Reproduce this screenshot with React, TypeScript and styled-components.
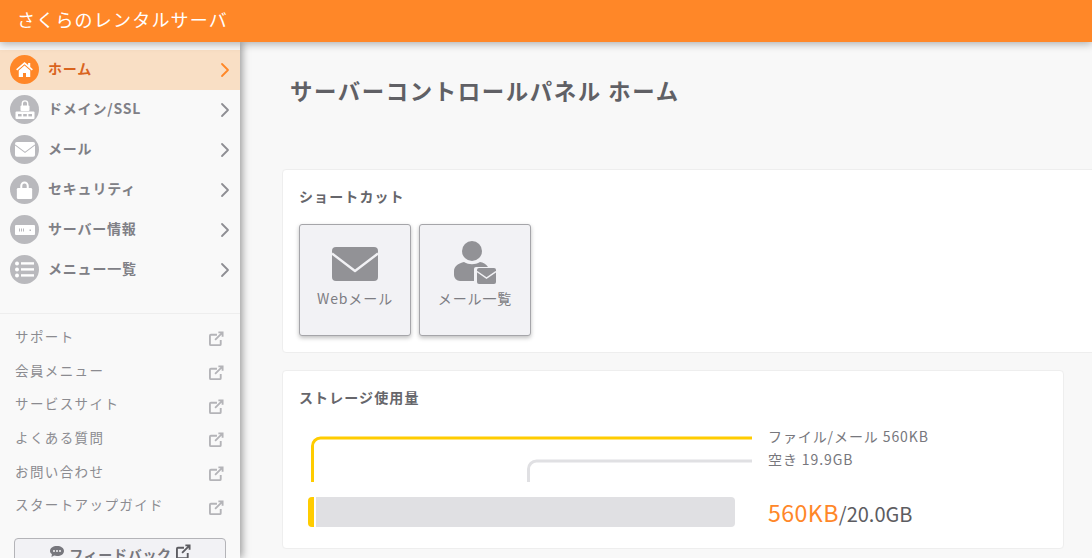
import styled, { createGlobalStyle } from 'styled-components'
import { FiChevronRight } from 'react-icons/fi'

const GlobalStyle = createGlobalStyle`
  html, body {
    margin: 0;
    height: 100%;
    overflow: hidden;
    background: #f8f8f8;
    font-family: "Noto Sans CJK JP", "Noto Sans", sans-serif;
  }
`

const Page = styled.div`
  width: 1092px;
  height: 558px;
  overflow: hidden;
  display: flex;
  flex-direction: column;
`
const Header = styled.header`
  height: 42px;
  flex: none;
  background: #ff8728;
  color: #fff;
  font-size: 18px;
  line-height: 39px;
  letter-spacing: 1.2px;
  padding-left: 17px;
  box-shadow: 0 2px 8px rgba(0, 0, 0, 0.3);
  position: relative;
  z-index: 2;
`
const Body = styled.div`
  flex: 1;
  display: flex;
  min-height: 0;
`
const Sidebar = styled.aside`
  width: 240px;
  flex: none;
  background: #f9f9f9;
  box-shadow: 2px 0 8px rgba(0, 0, 0, 0.4);
  padding-top: 8px;
  position: relative;
  z-index: 1;
`
const MenuItem = styled.div<{ $active?: boolean }>`
  box-sizing: border-box;
  height: 40px;
  display: flex;
  align-items: center;
  padding: 0 3px 1px 10px;
  background: ${(p) => (p.$active ? '#f9dfc5' : 'transparent')};
  color: ${(p) => (p.$active ? '#d9641e' : '#808086')};
  font-size: 14px;
  font-weight: 700;
  letter-spacing: 0.8px;
`
const MenuIcon = styled.span<{ $active?: boolean }>`
  width: 29px;
  height: 29px;
  border-radius: 50%;
  flex: none;
  background: ${(p) => (p.$active ? '#ff8728' : '#b9b9bd')};
  display: flex;
  align-items: center;
  justify-content: center;
  margin-right: 9px;
`
const MenuLabel = styled.span`
  flex: 1;
  position: relative;
  top: -2px;
`
const Chevron = styled(FiChevronRight)<{ $active?: boolean }>`
  width: 24px;
  height: 24px;
  stroke-width: 1.8;
  color: ${(p) => (p.$active ? '#ff8728' : '#8e8e93')};
`
const SubMenu = styled.nav`
  margin-top: 23px;
  border-top: 1px solid #eeeeee;
  padding: 6px 15px 0;
`
const SubItem = styled.div`
  height: 33.7px;
  display: flex;
  align-items: center;
  justify-content: space-between;
  color: #8b8b90;
  font-size: 13.5px;
  letter-spacing: 1.4px;
`
const SubLabel = styled.span`
  position: relative;
  top: -1px;
`
const SubIcon = styled.span`
  display: flex;
  position: relative;
  top: 2px;
  margin-right: 1px;
`
const FeedbackButton = styled.button`
  margin: 16px 0 0 -1px;
  width: 212px;
  height: 34px;
  display: flex;
  align-items: flex-start;
  justify-content: center;
  gap: 4px;
  padding: 5px 0 0;
  background: #f2f2f5;
  border: 1px solid #b4b4b8;
  border-radius: 4px;
  color: #77777d;
  font-family: inherit;
  font-size: 14px;
  font-weight: 700;
  letter-spacing: 0.7px;
`
const Main = styled.main`
  flex: 1;
  min-width: 0;
  padding: 0 0 0 42px;
`
const Title = styled.h1`
  margin: 30px 0 0 8px;
  font-size: 22.4px;
  line-height: 36px;
  font-weight: 700;
  color: #606065;
  letter-spacing: 1.6px;
`
const Card = styled.section<{ $width: number; $height: number }>`
  box-sizing: border-box;
  width: ${(p) => p.$width}px;
  height: ${(p) => p.$height}px;
  background: #fff;
  border: 1px solid #eeeeee;
  border-radius: 4px;
  padding: 16px;
`
const ShortcutCard = styled(Card)`
  margin-top: 61px;
`
const StorageCard = styled(Card)`
  margin-top: 17px;
`
const CardTitle = styled.h2`
  margin: 0;
  font-size: 14px;
  line-height: 20px;
  font-weight: 700;
  color: #66666b;
  letter-spacing: 1.1px;
`
const ShortcutRow = styled.div`
  display: flex;
  gap: 8px;
  margin-top: 18px;
`
const Shortcut = styled.button`
  box-sizing: border-box;
  width: 112px;
  height: 112px;
  display: flex;
  flex-direction: column;
  align-items: center;
  padding: 16px 0 0;
  background: #f2f2f5;
  border: 1px solid #a5a5a9;
  border-radius: 3px;
  box-shadow: 0 2px 4px rgba(0, 0, 0, 0.25);
  color: #7d7d83;
  font-family: inherit;
  font-size: 14px;
  line-height: 20px;
  letter-spacing: 0.9px;
`
const ShortcutIcon = styled.span`
  height: 46px;
  margin-bottom: 1px;
  display: flex;
  align-items: center;
  justify-content: center;
`
const StorageLayout = styled.div`
  display: flex;
  margin-top: 18px;
`
const Gauge = styled.div`
  width: 452px;
  margin-left: 9px;
  display: flex;
  flex-direction: column;
`
const BarTrack = styled.div`
  display: flex;
  gap: 2px;
  height: 30px;
  width: 427px;
  margin-top: 15px;
`
const BarUsed = styled.div`
  width: 6px;
  background: #ffcc00;
  border-radius: 4px 0 0 4px;
`
const BarFree = styled.div`
  flex: 1;
  background: #e0e0e3;
  border-radius: 0 4px 4px 0;
`
const Legend = styled.div`
  margin-left: 8px;
  color: #77777d;
  font-size: 14px;
  letter-spacing: 0.9px;
`
const LegendLine = styled.div`
  line-height: 23px;
`
const Total = styled.div`
  margin-top: 26px;
  font-size: 20px;
  line-height: 30px;
  color: #5c5c61;
  letter-spacing: 0;
`
const TotalUsed = styled.span`
  color: #ff8728;
  font-size: 23.2px;
  letter-spacing: 0.4px;
`

const HomeGlyph = () => (
  <svg width="17" height="15" viewBox="0 0 19 17" fill="#fff">
    <path d="M9.500 0 0 8.200l1.200 1.400L9.500 2.500l8.300 7.100L19 8.200l-3-2.600V1h-2.400v2.500z" />
    <path d="M9.500 4 3 9.600V17h4.800v-4.600h3.400V17H16V9.600z" />
  </svg>
)
const DomainGlyph = () => (
  <svg width="24" height="24" viewBox="0 0 24 24" fill="#fff">
    <path d="M8.600 8V5.600a3.400 3.400 0 0 1 6.800 0V8H14V5.600a2 2 0 0 0-4 0V8z" />
    <rect x="7.500" y="7.500" width="9" height="5.500" rx="1" />
    <rect x="2.500" y="13.500" width="19" height="7.500" rx="1" />
    <g fill="#b9b9bd">
      <rect x="5" y="16" width="3.600" height="2.400" />
      <rect x="10.200" y="16" width="3.600" height="2.400" />
      <rect x="15.400" y="16" width="3.600" height="2.400" />
    </g>
  </svg>
)
const EnvelopeGlyph = ({ size, color, gap }: { size: number; color: string; gap: string }) => (
  <svg width={size} height={(size * 34) / 46} viewBox="0 0 46 34">
    <path
      d="M4 0h38a4 4 0 0 1 4 4v26a4 4 0 0 1-4 4H4a4 4 0 0 1-4-4V4a4 4 0 0 1 4-4z"
      fill={color}
    />
    <path d="M0 6.500 23 24 46 6.500" fill="none" stroke={gap} strokeWidth="2.400" strokeLinejoin="round" />
  </svg>
)
const LockGlyph = () => (
  <svg width="17" height="20" viewBox="0 0 20 23" fill="#fff">
    <path d="M5 10V6.500a5 5 0 0 1 10 0V10h-2.400V6.500a2.600 2.600 0 0 0-5.200 0V10z" />
    <rect x="1" y="9" width="18" height="13" rx="1.500" />
  </svg>
)
const ServerGlyph = () => (
  <svg width="20" height="10" viewBox="0 0 20 10">
    <rect width="20" height="10" rx="1" fill="#fff" />
    <g fill="#b9b9bd">
      <rect x="4" y="3.500" width="1" height="3" />
      <rect x="6" y="3.500" width="1" height="3" />
      <rect x="8" y="3.500" width="1" height="3" />
      <rect x="14.500" y="4.500" width="1.500" height="1.500" />
    </g>
  </svg>
)
const ListGlyph = () => (
  <svg width="19" height="17" viewBox="0 0 19 17" fill="#fff">
    <circle cx="2" cy="2.500" r="2" />
    <circle cx="2" cy="8.500" r="2" />
    <circle cx="2" cy="14.500" r="2" />
    <rect x="6" y="1.200" width="13" height="2.400" />
    <rect x="6" y="7.200" width="13" height="2.400" />
    <rect x="6" y="13.200" width="13" height="2.400" />
  </svg>
)
const ExternalGlyph = ({ color = '#b4b4b8', size = 15 }: { color?: string; size?: number }) => (
  <svg width={size} height={size} viewBox="0 0 16 16" fill="none" stroke={color} strokeWidth="2">
    <path d="M12.500 9.500V14a1 1 0 0 1-1 1H2a1 1 0 0 1-1-1V5a1 1 0 0 1 1-1h6.500" />
    <path d="M6.500 9.500 14 2M10 1.500h4.500V6" />
  </svg>
)
const ChatGlyph = () => (
  <svg width="16" height="14" viewBox="0 0 16 14">
    <path d="M8 2c4 0 7 2 7 5s-3 5-7 5c-1 0-2-.1-2.800-.4L2.500 13l.4-3C1.700 9.300 1 8.200 1 7c0-3 3-5 7-5z" fill="#77777d" />
    <g fill="#f2f2f5">
      <circle cx="5" cy="7" r="1" />
      <circle cx="8" cy="7" r="1" />
      <circle cx="11" cy="7" r="1" />
    </g>
  </svg>
)
const PersonMailGlyph = () => (
  <svg width="42" height="46" viewBox="0 0 42 46">
    <circle cx="18" cy="10" r="10" fill="#929296" />
    <path
      d="M6 40a6 6 0 0 1-6-6v-4c0-5 5-8 10-9 5 3 11 3 16 0 3 .5 6 2 8 5H22a2 2 0 0 0-2 2v12z"
      fill="#929296"
    />
    <rect x="23" y="27" width="19" height="16" rx="2" fill="#929296" />
    <path d="M23 30.500 32.500 37 42 30.500" fill="none" stroke="#f2f2f5" strokeWidth="1.500" />
  </svg>
)

const menuItems = [
  { label: 'ホーム', icon: <HomeGlyph />, active: true },
  { label: 'ドメイン/SSL', icon: <DomainGlyph /> },
  { label: 'メール', icon: <EnvelopeGlyph size={20} color="#fff" gap="#b9b9bd" /> },
  { label: 'セキュリティ', icon: <LockGlyph /> },
  { label: 'サーバー情報', icon: <ServerGlyph /> },
  { label: 'メニュー一覧', icon: <ListGlyph /> },
]

const subItems = ['サポート', '会員メニュー', 'サービスサイト', 'よくある質問', 'お問い合わせ', 'スタートアップガイド']

export default function App() {
  return (
    <Page>
      <GlobalStyle />
      <Header>さくらのレンタルサーバ</Header>
      <Body>
        <Sidebar>
          {menuItems.map((item) => (
            <MenuItem key={item.label} $active={item.active}>
              <MenuIcon $active={item.active}>{item.icon}</MenuIcon>
              <MenuLabel>{item.label}</MenuLabel>
              <Chevron $active={item.active} />
            </MenuItem>
          ))}
          <SubMenu>
            {subItems.map((label) => (
              <SubItem key={label}>
                <SubLabel>{label}</SubLabel>
                <SubIcon>
                  <ExternalGlyph />
                </SubIcon>
              </SubItem>
            ))}
            <FeedbackButton>
              <ChatGlyph />
              フィードバック
              <ExternalGlyph color="#5c5c61" size={15} />
            </FeedbackButton>
          </SubMenu>
        </Sidebar>
        <Main>
          <Title>サーバーコントロールパネル ホーム</Title>
          <ShortcutCard $width={830} $height={184}>
            <CardTitle>ショートカット</CardTitle>
            <ShortcutRow>
              <Shortcut>
                <ShortcutIcon>
                  <EnvelopeGlyph size={46} color="#929296" gap="#f2f2f5" />
                </ShortcutIcon>
                Webメール
              </Shortcut>
              <Shortcut>
                <ShortcutIcon>
                  <PersonMailGlyph />
                </ShortcutIcon>
                メール一覧
              </Shortcut>
            </ShortcutRow>
          </ShortcutCard>
          <StorageCard $width={782} $height={179}>
            <CardTitle>ストレージ使用量</CardTitle>
            <StorageLayout>
              <Gauge>
                <svg width="452" height="57" viewBox="0 0 452 57" fill="none" strokeWidth="3">
                  <path d="M4.500 57V21a8 8 0 0 1 8-8H444" stroke="#ffcc00" />
                  <path d="M220.500 57V44a8 8 0 0 1 8-8H444" stroke="#e0e0e3" />
                </svg>
                <BarTrack>
                  <BarUsed />
                  <BarFree />
                </BarTrack>
              </Gauge>
              <Legend>
                <LegendLine>ファイル/メール 560KB</LegendLine>
                <LegendLine>空き 19.9GB</LegendLine>
                <Total>
                  <TotalUsed>560KB</TotalUsed>/20.0GB
                </Total>
              </Legend>
            </StorageLayout>
          </StorageCard>
        </Main>
      </Body>
    </Page>
  )
}
